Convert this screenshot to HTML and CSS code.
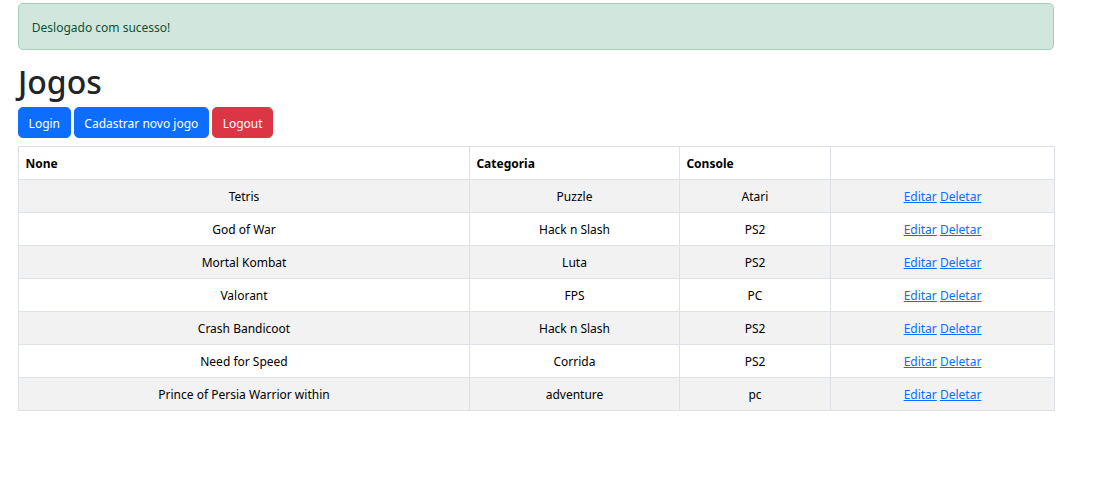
FILE: index.html
```html
<!DOCTYPE html>
<html lang="pt-BR">
<head>
<meta charset="utf-8">
<title>Jogos</title>
<link rel="stylesheet" href="styles.css">
</head>
<body>
<div class="page">
  <div class="alert">Deslogado com sucesso!</div>
  <h1 class="title">Jogos</h1>
  <div class="actions">
    <a class="btn btn-primary" href="#">Login</a>
    <a class="btn btn-primary" href="#">Cadastrar novo jogo</a>
    <a class="btn btn-danger" href="#">Logout</a>
  </div>
  <table class="games">
    <colgroup>
      <col class="c1"><col class="c2"><col class="c3"><col class="c4">
    </colgroup>
    <thead>
      <tr><th>None</th><th>Categoria</th><th>Console</th><th></th></tr>
    </thead>
    <tbody>
      <tr><td>Tetris</td><td>Puzzle</td><td>Atari</td><td><a href="#">Editar</a> <a href="#">Deletar</a></td></tr>
      <tr><td>God of War</td><td>Hack n Slash</td><td>PS2</td><td><a href="#">Editar</a> <a href="#">Deletar</a></td></tr>
      <tr><td>Mortal Kombat</td><td>Luta</td><td>PS2</td><td><a href="#">Editar</a> <a href="#">Deletar</a></td></tr>
      <tr><td>Valorant</td><td>FPS</td><td>PC</td><td><a href="#">Editar</a> <a href="#">Deletar</a></td></tr>
      <tr><td>Crash Bandicoot</td><td>Hack n Slash</td><td>PS2</td><td><a href="#">Editar</a> <a href="#">Deletar</a></td></tr>
      <tr><td>Need for Speed</td><td>Corrida</td><td>PS2</td><td><a href="#">Editar</a> <a href="#">Deletar</a></td></tr>
      <tr><td>Prince of Persia Warrior within</td><td>adventure</td><td>pc</td><td><a href="#">Editar</a> <a href="#">Deletar</a></td></tr>
    </tbody>
  </table>
</div>
</body>
</html>
```
FILE: styles.css
```css
html, body {
  margin: 0;
  padding: 0;
  background: #fff;
}
body {
  font-family: "Segoe UI", "Noto Sans", "Open Sans", sans-serif;
  font-size: 12px;
  line-height: 19.2px;
  color: #212529;
}
.page {
  width: 1036px;
  padding: 3px 0 0 18px;
}
.alert {
  background: #d1e7dd;
  border: 1px solid #a3cfbb;
  color: #0f5132;
  border-radius: 4.8px;
  padding: 13.8px 12.8px 11.8px;
  margin-bottom: 12.8px;
}
.title {
  font-size: 32px;
  font-weight: 500;
  line-height: 38.4px;
  margin: 0 0 6.4px 0;
  color: #212529;
}
.actions {
  height: 31px;
}
.btn {
  display: inline-block;
  padding: 5.8px 9.6px 3.8px;
  border: 1px solid transparent;
  border-radius: 4.8px;
  color: #fff;
  text-decoration: none;
  line-height: 19.2px;
  vertical-align: top;
}
.btn-primary {
  background: #0d6efd;
  border-color: #0d6efd;
}
.btn-danger {
  background: #dc3545;
  border-color: #dc3545;
}
.games {
  margin-top: 8px;
  width: 1036px;
  border-collapse: collapse;
  table-layout: fixed;
  color: #000;
}
.c1 { width: 451px; }
.c2 { width: 210px; }
.c3 { width: 151px; }
.c4 { width: 224px; }
.games th, .games td {
  border: 1px solid #dee2e6;
  padding: 6.9px 6.4px 5.9px;
  line-height: 19.2px;
  height: 19.2px;
}
.games th {
  text-align: left;
  font-weight: 700;
}
.games td {
  text-align: center;
}
.games tbody tr:nth-child(odd) td {
  background: #f2f2f2;
}
.games a {
  color: #0d6efd;
  text-decoration: underline;
}
```
